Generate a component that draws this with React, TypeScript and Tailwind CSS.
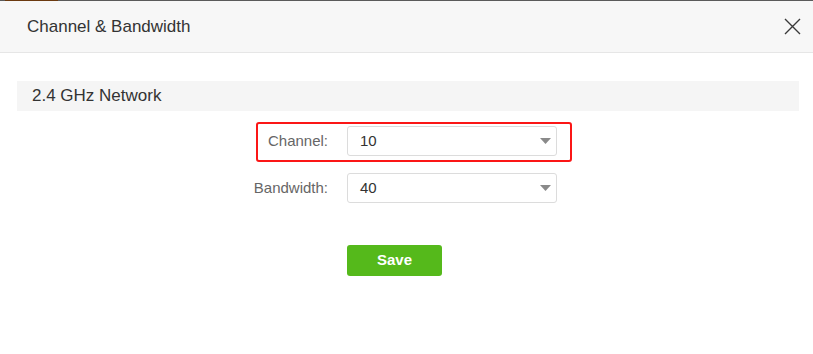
import { useState } from 'react';

const FONT = { fontFamily: '"Liberation Sans", Arial, sans-serif' };

function SelectBox({ value }: { value: string }) {
  return (
    <div className="flex h-[30px] w-[210px] items-center justify-between rounded-[3px] border border-[#dcdcdc] bg-white pl-[12px] pr-[5px]">
      <span className="text-[15px] text-[#333]">{value}</span>
      <svg width="11" height="6" viewBox="0 0 11 6">
        <path d="M0 0 H11 L5.5 6 Z" fill="#8a8a8a" />
      </svg>
    </div>
  );
}

export default function App() {
  const [channel] = useState('10');
  const [bandwidth] = useState('40');

  return (
    <div className="h-[354px] w-[813px] overflow-hidden bg-white" style={FONT}>
      {/* page behind the dialog */}
      <div className="flex h-px bg-[#5b5b5b]">
        <div className="ml-[5px] w-[53px] bg-[#6b3a10]" />
      </div>

      {/* header */}
      <div className="flex h-[52px] items-center justify-between border-b border-[#e6e6e6] bg-[#f7f7f7] pl-[27px] pr-[11px]">
        <h1 className="text-[17px] text-[#333]">Channel &amp; Bandwidth</h1>
        <button className="flex h-[20px] w-[20px] items-center justify-center">
          <svg width="17" height="17" viewBox="0 0 17 17">
            <path d="M1 1 L16 16 M16 1 L1 16" stroke="#3a3a3a" strokeWidth="1.4" fill="none" />
          </svg>
        </button>
      </div>

      {/* body */}
      <div className="pl-[17px] pr-[14px] pt-[28px]">
        <div className="flex h-[30px] items-center bg-[#f5f5f5] pl-[15px]">
          <h2 className="text-[17px] text-[#333]">2.4 GHz Network</h2>
        </div>

        <div className="mt-[15px] flex flex-col gap-[17px]">
          <div className="relative flex items-center">
            <div className="pointer-events-none absolute left-[239px] top-[-4px] h-[40px] w-[316px] rounded-[3px] border-2 border-[#fb1616]" />
            <label className="w-[330px] pr-[19px] text-right text-[15px] text-[#666]">Channel:</label>
            <SelectBox value={channel} />
          </div>
          <div className="flex items-center">
            <label className="w-[330px] pr-[19px] text-right text-[15px] text-[#666]">Bandwidth:</label>
            <SelectBox value={bandwidth} />
          </div>
        </div>

        <div className="mt-[42px] pl-[330px]">
          <button className="h-[31px] w-[95px] rounded-[3px] bg-[#55b91b] text-[15px] font-semibold text-white">
            Save
          </button>
        </div>
      </div>
    </div>
  );
}
